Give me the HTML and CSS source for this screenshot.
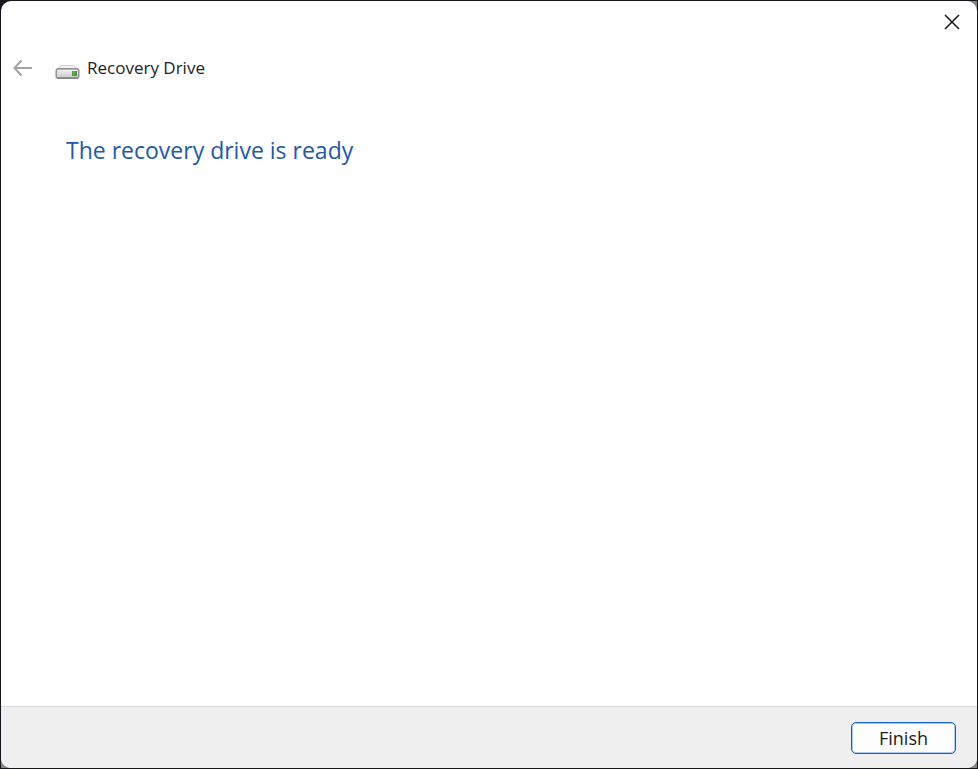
FILE: index.html
```html
<!DOCTYPE html>
<html lang="en">
<head>
    <meta charset="UTF-8">
    <meta name="viewport" content="width=device-width, initial-scale=1.0">
    <title>Recovery Drive</title>
    <link rel="stylesheet" href="styles.css">
</head>
<body>
    <div class="wizard">
        <div class="title-bar">
            <button class="icon-btn close-btn" type="button" aria-label="Close">
                <svg width="16" height="16" viewBox="0 0 16 16" fill="none" stroke="#15151a" stroke-width="1.5">
                    <path d="M1 1L15 15M15 1L1 15"/>
                </svg>
            </button>
        </div>
        <header class="wizard-header">
            <button class="icon-btn" type="button" aria-label="Back" disabled>
                <svg width="20" height="18" viewBox="0 0 20 18" fill="none" stroke="#a3a3a3" stroke-width="2">
                    <path d="M20 9H2.5M9.5 1.5L2.5 9L9.5 16.5"/>
                </svg>
            </button>
            <svg class="drive-icon" width="26" height="16" viewBox="0 0 26 16">
                <defs>
                    <linearGradient id="driveFront" x1="0" y1="0" x2="0" y2="1">
                        <stop offset="0" stop-color="#f6f6f6"/>
                        <stop offset="1" stop-color="#c6c6c6"/>
                    </linearGradient>
                </defs>
                <path d="M6.5 1.5H18.5L23 5H2Z" fill="#f1f1f1" stroke="#cdcdcd"/>
                <rect x="1.2" y="4.7" width="22.6" height="9.6" rx="2.4" fill="url(#driveFront)" stroke="#909090" stroke-width="1.5"/>
                <path d="M3 5.5H22" stroke="#b5b5b5"/>
                <path d="M3 14H22" stroke="#757575"/>
                <rect x="17" y="7" width="5" height="5" fill="#66756a"/>
                <rect x="17.5" y="7" width="3" height="4.5" fill="#3fc41f"/>
            </svg>
            <h1>Recovery Drive</h1>
        </header>
        <main class="wizard-content">
            <h2>The recovery drive is ready</h2>
        </main>
        <footer class="wizard-footer">
            <button class="finish-btn" type="button">Finish</button>
        </footer>
    </div>
</body>
</html>
```

FILE: styles.css
```css
* {
    box-sizing: border-box;
}

html {
    background-color: #14161c;
}

body {
    display: flex;
    min-height: 100vh;
    margin: 0;
    border: 1px solid #14161c;
    background: radial-gradient(circle at top left, #14161c 20px, #858585 30px);
    font-family: "Segoe UI", "Open Sans", "Noto Sans", sans-serif;
}

.wizard {
    display: flex;
    flex: 1;
    flex-direction: column;
    border-radius: 10px;
    background-color: #fff;
    overflow: hidden;
}

.title-bar {
    display: flex;
    justify-content: flex-end;
    padding: 13px 17px;
}

.icon-btn {
    display: flex;
    padding: 0;
    border: none;
    background: none;
}

.wizard-header {
    display: flex;
    align-items: center;
    height: 32px;
    margin-top: 9px;
    padding: 0 11px;
}

.drive-icon {
    margin: 8px 6px 0 23px;
}

.wizard-header h1 {
    margin: 0;
    font-size: 17px;
    font-weight: 400;
    line-height: 24px;
    color: #222;
}

.wizard-content {
    flex: 1;
    padding: 50px 65px;
}

.wizard-content h2 {
    margin: 0;
    font-size: 23px;
    font-weight: 400;
    line-height: 32px;
    color: #2159a8;
}

.wizard-footer {
    display: flex;
    justify-content: flex-end;
    padding: 15px 21px 14px;
    border-top: 1px solid #d9d9d9;
    background-color: #efefef;
}

.finish-btn {
    width: 105px;
    height: 32px;
    padding: 0;
    border: 1px solid #0f62cc;
    border-radius: 5px;
    background-color: #fdfdfd;
    box-shadow: inset 0 0 0 1px #a9c9ef;
    font-family: inherit;
    font-size: 18px;
    color: #1a1a1a;
}
```
